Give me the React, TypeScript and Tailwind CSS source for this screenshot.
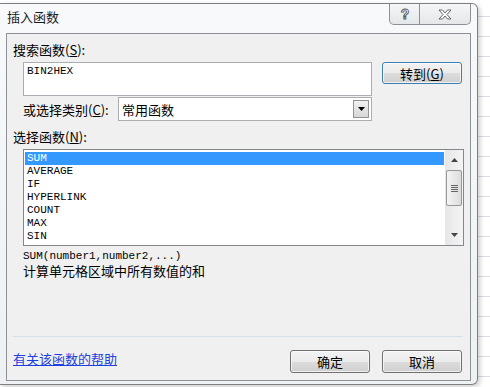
import React from "react"

const btn =
    "flex items-center justify-center rounded-[3px] border bg-[linear-gradient(to_bottom,#f2f2f2_0%,#ebebeb_50%,#dddddd_50%,#cfcfcf_100%)] text-[13px] leading-none text-black shadow-[inset_0_0_0_1px_rgba(255,255,255,0.7)]"

const funcs = ["SUM", "AVERAGE", "IF", "HYPERLINK", "COUNT", "MAX", "SIN"]

function TriDown() {
    return (
        <svg width="7" height="4" viewBox="0 0 7 4">
            <path d="M0 0h7L3.5 4z" fill="#000" />
        </svg>
    )
}

function ScrollBar() {
    return (
        <div className="flex h-full w-[18px] flex-col items-center bg-[linear-gradient(to_right,#e6e6e6,#f4f4f4)]">
            <div className="flex h-[20px] w-full items-center justify-center">
                <svg width="7" height="4" viewBox="0 0 7 4">
                    <path d="M0 4h7L3.5 0z" fill="#444" />
                </svg>
            </div>
            <div className="flex h-[36px] w-[16px] flex-col items-center justify-center gap-[1px] rounded-[2px] border border-[#989898] bg-[linear-gradient(to_right,#f4f4f4,#dcdcdc)]">
                <div className="h-[1px] w-[7px] bg-[#666]" />
                <div className="h-[1px] w-[7px] bg-[#666]" />
                <div className="h-[1px] w-[7px] bg-[#666]" />
                <div className="h-[1px] w-[7px] bg-[#666]" />
            </div>
            <div className="flex-1" />
            <div className="flex h-[20px] w-full items-center justify-center">
                <svg width="7" height="4" viewBox="0 0 7 4">
                    <path d="M0 0h7L3.5 4z" fill="#444" />
                </svg>
            </div>
        </div>
    )
}

export default function App() {
    return (
        <div className="h-[387px] w-[490px] overflow-hidden bg-white bg-[repeating-linear-gradient(to_bottom,transparent_0,transparent_16px,#d9dee4_16px,#d9dee4_17px,transparent_17px,transparent_20px)] pt-[3px] font-['Noto_Sans_CJK_SC',sans-serif] text-[#000]">
            {/* window */}
            <div className="flex h-[382px] w-[478px] flex-col rounded-r-[6px] border border-l-0 border-[#7d7f82] bg-[linear-gradient(to_bottom,#f7f9fb,#eef1f4)] shadow-[2px_2px_5px_rgba(0,0,0,0.2)]">
                <div className="flex h-[29px] items-start justify-between">
                    <p className="pl-[7px] pt-[3px] text-[13px] leading-[20px] text-[#1b1b1b]">插入函数</p>
                    <div className="mr-[6px] flex h-[21px] rounded-b-[5px] border-x border-b border-[#8d9095] bg-[linear-gradient(to_bottom,#f5f6f7,#e4e7ea)]">
                        <div className="flex w-[30px] items-center justify-center border-r border-[#8d9095]">
                            <svg width="12" height="16" viewBox="0 0 12 16">
                                <text x="6" y="13" textAnchor="middle" fontSize="14" fontWeight="bold" fontFamily="Liberation Sans, sans-serif" fill="#fff" stroke="#555" strokeWidth="0.9">?</text>
                            </svg>
                        </div>
                        <div className="flex w-[50px] items-center justify-center">
                            <svg width="14" height="11" viewBox="0 0 14 11">
                                <path d="M1 1h3.5L7 4l2.5-3H13L9 5.5 13 10H9.5L7 7l-2.5 3H1L5 5.5z" fill="#fff" stroke="#5a5a5a" strokeWidth="0.9" strokeLinejoin="round" />
                            </svg>
                        </div>
                    </div>
                </div>

                {/* client area */}
                <div className="mx-[6px] h-[348px] border border-[#8e9195] bg-[#f0f0f0] pl-[6px]">
                    <p className="mt-[7px] h-[17px] text-[13px] leading-[17px]">
                        搜索函数(<span className="underline">S</span>):
                    </p>
                    <div className="mt-[4px] flex items-start">
                        <div className="ml-[10px] h-[34px] w-[349px] border border-[#abadb3] bg-white pl-[3px] pt-[2px] font-['Liberation_Mono',monospace] text-[11px] leading-[13px]">
                            BIN2HEX
                        </div>
                        <div className={`${btn} ml-[10px] h-[22px] w-[80px] border-[#3c7fb1] shadow-[inset_0_0_0_1px_#bfe5f7]`}>
                            转到(<span className="underline">G</span>)
                        </div>
                    </div>
                    <div className="mt-[1px] flex h-[24px] items-center">
                        <p className="ml-[10px] w-[95px] text-[13px] leading-[17px]">
                            或选择类别(<span className="underline">C</span>):
                        </p>
                        <div className="flex h-[24px] w-[254px] items-center justify-between border border-[#abadb3] bg-white pl-[3px] pr-[2px]">
                            <span className="text-[13px] leading-[17px]">常用函数</span>
                            <div className="flex h-[18px] w-[16px] items-center justify-center border border-[#8f9296] bg-[linear-gradient(to_bottom,#f2f2f2,#d6d6d6)]">
                                <TriDown />
                            </div>
                        </div>
                    </div>
                    <p className="mt-[7px] h-[17px] text-[13px] leading-[17px]">
                        选择函数(<span className="underline">N</span>):
                    </p>
                    <div className="ml-[10px] mt-[4px] flex h-[97px] w-[441px] border border-[#828790] bg-white">
                        <div className="flex-1 pl-[1px] pr-[1px] pt-[2px] font-['Liberation_Mono',monospace] text-[11px] leading-[13px]">
                            {funcs.map((f, i) => (
                                <div key={f} className={i === 0 ? "h-[13px] bg-[#3399ff] pl-[2px] text-white" : "h-[13px] pl-[2px]"}>
                                    {f}
                                </div>
                            ))}
                        </div>
                        <ScrollBar />
                    </div>
                    <p className="ml-[10px] mt-[4px] h-[13px] font-['Liberation_Mono',monospace] text-[11px] leading-[13px]">
                        SUM(number1,number2,...)
                    </p>
                    <p className="ml-[10px] h-[16px] text-[13px] leading-[16px]">计算单元格区域中所有数值的和</p>
                    <div className="mt-[57px] h-[1px] w-[450px] bg-[#d5dfe5]" />
                    <div className="mt-[13px] flex h-[23px] w-[449px] items-start justify-between">
                        <a className="pt-[1px] text-[13px] leading-[16px] text-[#1d3fe0] underline">有关该函数的帮助</a>
                        <div className="flex gap-[12px]">
                            <div className={`${btn} h-[23px] w-[80px] border-[#707070]`}>确定</div>
                            <div className={`${btn} h-[23px] w-[80px] border-[#707070]`}>取消</div>
                        </div>
                    </div>
                </div>
            </div>
        </div>
    )
}
